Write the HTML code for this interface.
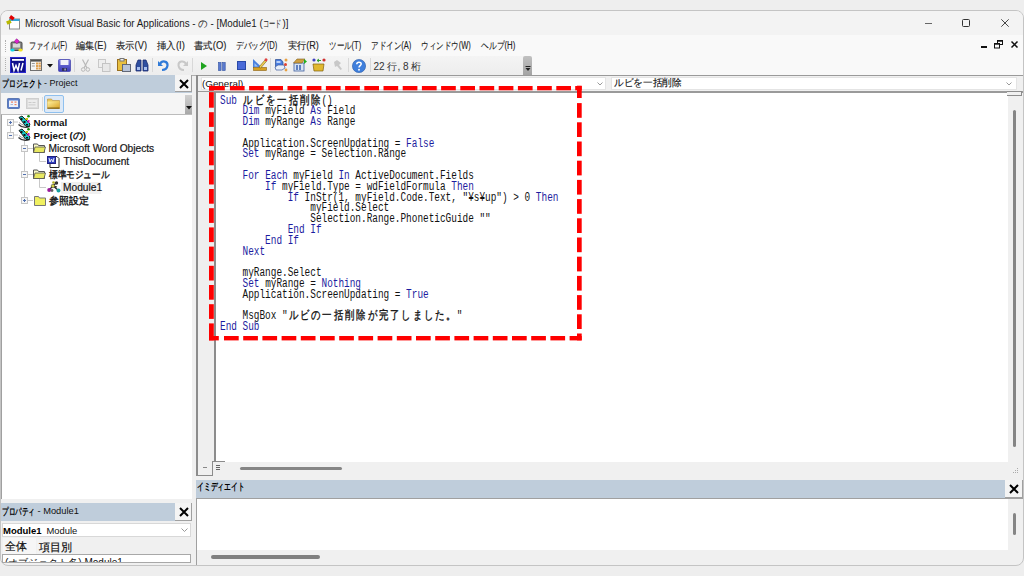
<!DOCTYPE html>
<html><head><meta charset="utf-8">
<style>
*{margin:0;padding:0;box-sizing:border-box}
html,body{width:1024px;height:576px;overflow:hidden;background:#eeeeee;font-family:"Liberation Sans",sans-serif;color:#000;position:relative}
.a{position:absolute}
.t{position:absolute;white-space:pre;line-height:1}
.hdr{position:absolute;background:#bfcddb}
.m{position:absolute;top:41px;transform-origin:0 0;-webkit-text-stroke:0.12px #222;font-size:10px;line-height:10px;white-space:pre;color:#222}
.tr{position:absolute;font-size:10.2px;line-height:10px;white-space:pre;color:#111;-webkit-text-stroke:0.2px #222}
.sep{position:absolute;top:58px;width:1px;height:14px;background:#d8d8d8}
.xb{position:absolute;background:#f4f4f4;border-right:1px solid #a0a0a0;border-bottom:1px solid #a0a0a0}
#code{position:absolute;left:220px;top:95.5px;font-family:"Liberation Mono",monospace;font-size:12px;line-height:10.8px;white-space:pre;transform:scaleX(0.7832);transform-origin:0 0;color:#111}
#code b{font-weight:normal;color:#1c1ca0}
#code i{font-style:normal;display:inline-block;width:14.4px;text-align:center;-webkit-text-stroke:0.35px #111}
svg{position:absolute;overflow:visible}
</style></head>
<body>
<!-- window frame -->
<div class="a" style="left:0;top:10px;width:1024px;height:556px;background:#f0f0f0;border:1px solid #c4c4c4;border-radius:8px"></div>
<!-- title bar -->
<div class="a" style="left:1px;top:11px;width:1022px;height:24px;background:#f3f3f3;border-radius:7px 7px 0 0"></div>
<svg style="left:6px;top:15px" width="15" height="15" viewBox="0 0 15 15">
  <rect x="3.5" y="4" width="10" height="10" fill="#fff" stroke="#8a8a8a" stroke-width="1"/>
  <rect x="3.5" y="4" width="10" height="2" fill="#33a8d8"/>
  <rect x="3.6" y="1" width="4.5" height="3.5" fill="#e00000" transform="rotate(35 5.8 2.8)"/>
  <rect x="0.6" y="5.5" width="4.5" height="3.5" fill="#b8b800" transform="rotate(-25 2.8 7.2)"/>
</svg>
<div class="t" style="left:24.5px;top:18.5px;font-size:10.3px;color:#1a1a1a;transform:scaleX(0.95);transform-origin:0 0">Microsoft Visual Basic for Applications - の - [Module1 (<span style="display:inline-block;width:21px;white-space:nowrap;vertical-align:top"><span style="display:inline-block;transform:scaleX(0.66);transform-origin:0 0">コード</span></span>)]</div>
<!-- window buttons -->
<div class="a" style="left:924.5px;top:22.5px;width:7.5px;height:1px;background:#666"></div>
<div class="a" style="left:962px;top:19px;width:8px;height:8px;border:1px solid #333;border-radius:1.5px"></div>
<svg style="left:1001px;top:19px" width="8" height="8"><path d="M0.3 0.3L7.7 7.7M7.7 0.3L0.3 7.7" stroke="#333" stroke-width="0.9"/></svg>

<!-- menu+toolbar area -->
<div class="a" style="left:1px;top:35px;width:1022px;height:40px;background:#f9f9f9"></div>
<div class="a" style="left:1px;top:75px;width:1022px;height:1px;background:#b0b0b0"></div>
<!-- menu grip -->
<div class="a" style="left:5px;top:40px;width:1px;height:12px;border-left:1px dotted #b0b0b0"></div>
<svg style="left:10px;top:39px" width="13" height="13" viewBox="0 0 13 13"><rect x="1" y="3" width="11" height="8.5" rx="1.2" fill="#8a8a8a" stroke="#3a3a3a" stroke-width="0.9"/><rect x="3" y="4.5" width="7" height="4" fill="#d8d8d8"/><rect x="5" y="0.5" width="3.6" height="3.6" fill="#e020d0" stroke="#802080" stroke-width="0.5" transform="rotate(40 6.8 2.3)"/><ellipse cx="2.5" cy="11" rx="2.2" ry="1.6" fill="#10d8e8"/><ellipse cx="10.5" cy="11" rx="2.2" ry="1.6" fill="#f0e020"/></svg>
<div class="m" style="left:28.5px;transform:scaleX(0.722)">ファイル(F)</div>
<div class="m" style="left:76px;transform:scaleX(0.915)">編集(E)</div>
<div class="m" style="left:116px;transform:scaleX(0.93)">表示(V)</div>
<div class="m" style="left:157px;transform:scaleX(0.947)">挿入(I)</div>
<div class="m" style="left:194px;transform:scaleX(0.94)">書式(O)</div>
<div class="m" style="left:236px;transform:scaleX(0.768)">デバッグ(D)</div>
<div class="m" style="left:288px;transform:scaleX(0.909)">実行(R)</div>
<div class="m" style="left:328.5px;transform:scaleX(0.753)">ツール(T)</div>
<div class="m" style="left:370.5px;transform:scaleX(0.757)">アドイン(A)</div>
<div class="m" style="left:421px;transform:scaleX(0.753)">ウィンドウ(W)</div>
<div class="m" style="left:480.5px;transform:scaleX(0.78)">ヘルプ(H)</div>
<!-- MDI buttons -->
<div class="a" style="left:981px;top:46px;width:5.5px;height:1.8px;background:#111"></div>
<svg style="left:994px;top:40px" width="10" height="9"><rect x="3.5" y="0.5" width="5" height="4" fill="none" stroke="#111"/><rect x="0.5" y="3.5" width="5" height="4.5" fill="#f9f9f9" stroke="#111"/><rect x="0.5" y="3.5" width="5" height="1.2" fill="#111"/><rect x="3.5" y="0.5" width="5" height="1.2" fill="#111"/></svg>
<svg style="left:1011px;top:40.5px" width="7" height="7"><path d="M0.5 0.5L6.5 6.5M6.5 0.5L0.5 6.5" stroke="#111" stroke-width="1.5"/></svg>

<!-- toolbar -->
<div class="a" style="left:1px;top:56px;width:523px;height:19px;background:linear-gradient(#f4f4f4,#ededed)"></div>
<div class="a" style="left:5px;top:58px;width:1px;height:13px;border-left:1px dotted #b0b0b0"></div>
<svg style="left:10px;top:57px" width="16" height="16" viewBox="0 0 16 16"><rect x="0.5" y="0.5" width="15" height="15" fill="#10108a" stroke="#2a2ad0"/><rect x="2" y="2" width="12" height="1.8" fill="#fff"/><path d="M2.5 6L4 13.5L6 8.5L8 13.5L9.5 6" fill="none" stroke="#fff" stroke-width="1.5"/><path d="M13 6L11 13.5" stroke="#fff" stroke-width="1.5"/></svg>
<svg style="left:29.5px;top:59px" width="12" height="12" viewBox="0 0 12 12"><rect x="0.5" y="0.5" width="11" height="11" fill="#f4f4f4" stroke="#707070"/><rect x="1" y="1" width="10" height="1.6" fill="#505050"/><g fill="#e0a050"><rect x="6" y="3.5" width="2.2" height="2"/><rect x="8.6" y="3.5" width="2.2" height="2"/><rect x="6" y="6" width="2.2" height="2"/><rect x="8.6" y="6" width="2.2" height="2"/><rect x="6" y="8.5" width="2.2" height="2"/><rect x="8.6" y="8.5" width="2.2" height="2"/></g><rect x="1.8" y="4" width="3" height="1" fill="#999"/><rect x="1.8" y="6.5" width="3" height="1" fill="#999"/></svg>
<svg style="left:47px;top:64px" width="6" height="4"><path d="M0 0H6L3 3.5Z" fill="#111"/></svg>
<svg style="left:58px;top:59px" width="13" height="13" viewBox="0 0 13 13"><defs><linearGradient id="sg" x1="0" y1="0" x2="0" y2="1"><stop offset="0" stop-color="#7a7ae0"/><stop offset="1" stop-color="#3a3ab8"/></linearGradient></defs><rect x="0.5" y="0.5" width="12" height="12" rx="1" fill="url(#sg)" stroke="#4a4ab0" stroke-width="0.8"/><rect x="2.5" y="1" width="8" height="5" fill="#f0f0fa"/><rect x="4" y="9" width="5" height="3" fill="#303060"/><rect x="6.5" y="9.5" width="1.2" height="2" fill="#c0c0e0"/></svg>
<div class="sep" style="left:74px"></div>
<svg style="left:81px;top:59px" width="9" height="13" viewBox="0 0 9 13"><path d="M1.5 0.5L6 9M7.5 0.5L3 9" stroke="#b8b8b8" stroke-width="1.2" fill="none"/><circle cx="2.2" cy="10.5" r="1.8" fill="none" stroke="#b8b8b8"/><circle cx="6.8" cy="10.5" r="1.8" fill="none" stroke="#b8b8b8"/></svg>
<svg style="left:98px;top:59px" width="13" height="13"><rect x="0.5" y="0.5" width="7" height="8" fill="#eee" stroke="#c8c8c8"/><rect x="4.5" y="4.5" width="7.5" height="8" fill="#e8e8e8" stroke="#c4c4c4"/></svg>
<svg style="left:117px;top:58px" width="14" height="14" viewBox="0 0 14 14"><rect x="0.5" y="1.5" width="9" height="11" fill="#e8c040" stroke="#9a7020"/><rect x="3" y="0.5" width="4" height="2.5" fill="#f0f0f0" stroke="#777"/><rect x="5.5" y="6.5" width="8" height="7" fill="#b8c4d8" stroke="#606878"/></svg>
<svg style="left:135px;top:59px" width="14" height="13" viewBox="0 0 14 13"><path d="M1 12V6L3 1H6V12Z M8 12V1H11L13 6V12Z" fill="#2f4fa0" stroke="#1c2c70" stroke-width="0.8"/><rect x="2" y="8" width="3" height="3" fill="#a8c0f0"/><rect x="9" y="8" width="3" height="3" fill="#a8c0f0"/></svg>
<div class="sep" style="left:152px"></div>
<svg style="left:158px;top:59px" width="11" height="12" viewBox="0 0 11 12"><path d="M2 5C4 1 10 2 9.5 6.5C9 10 6 11 4 11" fill="none" stroke="#2f7ad8" stroke-width="2.2"/><path d="M0 2V7H5Z" fill="#2f7ad8"/></svg>
<svg style="left:177px;top:59px" width="11" height="12" viewBox="0 0 11 12"><path d="M9 5C7 1 1 2 1.5 6.5C2 10 5 11 7 11" fill="none" stroke="#c8c8c8" stroke-width="2"/><path d="M11 2V7H6Z" fill="#c8c8c8"/></svg>
<div class="sep" style="left:192px"></div>
<svg style="left:201px;top:62px" width="6" height="8"><path d="M0 0L6 4L0 8Z" fill="#1ea31e"/></svg>
<svg style="left:218px;top:62px" width="8" height="9"><rect x="0.5" y="0.5" width="2.6" height="8" fill="#5a7ad0" stroke="#3050a0" stroke-width="0.6"/><rect x="4.6" y="0.5" width="2.6" height="8" fill="#5a7ad0" stroke="#3050a0" stroke-width="0.6"/></svg>
<svg style="left:237px;top:61px" width="9" height="9"><rect x="0.5" y="0.5" width="8" height="8" fill="#4a6ad8" stroke="#2a4aa8"/></svg>
<svg style="left:253px;top:58px" width="15" height="14" viewBox="0 0 15 14"><path d="M0 1L9 9.5H0Z" fill="#4a80e0"/><path d="M1.5 5L5 8.5H1.5Z" fill="#9ac0f0"/><rect x="0.5" y="9.5" width="13" height="3" fill="#d8a020" stroke="#8a6010" stroke-width="0.6"/><path d="M6 9L12 2L13.5 3.3L7.5 10.2Z" fill="#f0d050" stroke="#7a5a10" stroke-width="0.6"/><circle cx="13" cy="1.8" r="1.5" fill="#e04040"/></svg>
<div class="sep" style="left:270px"></div>
<svg style="left:275px;top:58px" width="14" height="14" viewBox="0 0 14 14"><path d="M0.5 1.5H6L8 4L8 9H0.5Z" fill="#4a7ee0" stroke="#2a4a90" stroke-width="0.7"/><rect x="1.5" y="3" width="4" height="2" fill="#b8d0f8"/><path d="M0 9L3 7H9L10 10L7 12H1Z" fill="#e8eef8" stroke="#3a5aa0" stroke-width="0.7"/><circle cx="10.5" cy="6.5" r="1.5" fill="#e04030"/><circle cx="11" cy="2" r="1.5" fill="#e8a040"/><circle cx="11" cy="12" r="1.4" fill="#e8a040"/></svg>
<svg style="left:293px;top:58px" width="14" height="14" viewBox="0 0 14 14"><rect x="1" y="5" width="10" height="8" fill="#d8e4f4" stroke="#4060a0" stroke-width="0.8"/><path d="M0.5 5L4 1H12L9 5Z" fill="#d0a040" stroke="#806020" stroke-width="0.6"/><path d="M11 1L14 3.5L11 6Z" fill="#20b020"/><rect x="3" y="7" width="2" height="5" fill="#6080c0"/><rect x="6" y="7" width="2" height="5" fill="#6080c0"/></svg>
<svg style="left:312px;top:58px" width="14" height="14" viewBox="0 0 14 14"><path d="M1 6H12L11 13H2Z" fill="#e0b830" stroke="#806010" stroke-width="0.7"/><circle cx="2" cy="2" r="1.6" fill="#4040c0"/><circle cx="12" cy="2" r="1.6" fill="#d03030"/><path d="M5 2.5H9M5 2.5L7 1M5 2.5L7 4" stroke="#30a030" stroke-width="1"/></svg>
<svg style="left:333px;top:59px" width="9" height="11" viewBox="0 0 9 11"><path d="M1 3L4 1L8 4L6 6L9 10L7.5 11L4 7L2 8Z" fill="#c8c8c8"/></svg>
<div class="sep" style="left:348px"></div>
<svg style="left:352px;top:59px" width="14" height="14" viewBox="0 0 14 14"><circle cx="7" cy="7" r="6.6" fill="#3f7fdc" stroke="#2a5aa8" stroke-width="0.6"/><path d="M4.8 5.2C4.8 2.5 9.2 2.5 9.2 5C9.2 6.6 7 6.8 7 8.6" fill="none" stroke="#fff" stroke-width="1.5"/><circle cx="7" cy="10.8" r="0.95" fill="#fff"/></svg>
<div class="sep" style="left:370px"></div>
<div class="t" style="left:373.5px;top:62px;font-size:10px;color:#333">22 行, 8 桁</div>
<div class="a" style="left:523px;top:56px;width:9px;height:19px;background:linear-gradient(#c0c0c0,#a4a4a4);border-radius:2px 2px 0 0"></div>
<svg style="left:525px;top:66px" width="6" height="6"><rect x="0.5" y="0" width="5" height="1" fill="#222"/><path d="M0.5 2H5.5L3 5Z" fill="#222"/></svg>

<!-- Project explorer -->
<div class="hdr" style="left:1px;top:75px;width:191px;height:18px"></div>
<div class="t" style="left:2px;top:78.5px;font-size:9.5px;color:#000;font-weight:bold;transform:scaleX(0.68);transform-origin:0 0">プロジェクト</div><div class="t" style="left:44px;top:78.5px;font-size:9px;color:#111">- Project</div>
<div class="xb" style="left:175px;top:75px;width:17px;height:17px"></div>
<svg style="left:179px;top:79px" width="10" height="10"><path d="M1 1L9 9M9 1L1 9" stroke="#000" stroke-width="2"/></svg>
<div class="a" style="left:1px;top:93px;width:191px;height:21px;background:#f5f5f5"></div>
<svg style="left:7px;top:98px" width="13" height="11" viewBox="0 0 13 11"><rect x="0.5" y="0.5" width="12" height="10" rx="0.8" fill="#5a7cc8" stroke="#4a68a8" stroke-width="0.8"/><rect x="2" y="2.5" width="9" height="6.5" fill="#eef2fa"/><rect x="4" y="3.5" width="2" height="1.2" fill="#f08060"/><rect x="7.5" y="3.5" width="2" height="1.2" fill="#f08060"/><rect x="7.5" y="6" width="2" height="1.2" fill="#f08060"/><rect x="3.5" y="6" width="2.5" height="1" fill="#a8b8d8"/></svg>
<svg style="left:26px;top:98px" width="13" height="11"><rect x="0.5" y="0.5" width="12" height="10" fill="#dcdcdc" stroke="#cfcfcf"/><rect x="2" y="2" width="9" height="7" fill="#ececec"/><rect x="2.5" y="4" width="3" height="0.8" fill="#c4c4c4"/><rect x="6.5" y="4" width="3" height="0.8" fill="#c4c4c4"/><rect x="2.5" y="6.5" width="7" height="0.8" fill="#c4c4c4"/></svg>
<div class="a" style="left:42px;top:97px;width:1px;height:14px;background:#dcdcdc"></div>
<div class="a" style="left:44px;top:94.5px;width:19.5px;height:18.5px;background:#dde9f6;border:1px solid #8fc0ee;border-radius:2px"></div>
<svg style="left:47px;top:98px" width="13" height="11" viewBox="0 0 13 11"><defs><linearGradient id="fg" x1="0" y1="0" x2="1" y2="1"><stop offset="0" stop-color="#fff0a0"/><stop offset="1" stop-color="#d8a020"/></linearGradient></defs><path d="M0.5 1H4.5L5.5 2.5H12.5V10.5H0.5Z" fill="#e8c860" stroke="#b89040" stroke-width="0.6"/><rect x="0.5" y="3.5" width="12" height="7" fill="url(#fg)"/><rect x="0.5" y="9.6" width="12" height="1" fill="#6a5010"/></svg>
<div class="a" style="left:185px;top:95px;width:7px;height:19px;background:linear-gradient(#d0d0d0,#a8a8a8)"></div>
<svg style="left:186px;top:106px" width="6" height="4"><path d="M0 0H6L3 3.5Z" fill="#111"/></svg>
<div class="a" style="left:1px;top:114px;width:191px;height:385px;background:#fff;border-top:1px solid #bcbcbc;border-left:1.5px solid #a0a0a0"></div>
<!-- tree lines -->
<svg style="left:0;top:0" width="200" height="220">
  <g stroke="#c8c8c8" stroke-width="1" fill="none">
    <path d="M10.5 125V132"/>
    <path d="M13 122H18M13 135H18"/>
    <path d="M24.5 138V145M24.5 151V171M24.5 177V197"/>
    <path d="M28 148.5H33M28 174.5H33M28 200.5H33"/>
    <path d="M39.5 152V161.5H46M39.5 178V187.5H46"/>
  </g>
  <g fill="#f6f6f6" stroke="#c4c4c4">
    <rect x="7.5" y="119.5" width="6" height="6"/>
    <rect x="7.5" y="132.5" width="6" height="6"/>
    <rect x="21.5" y="145.5" width="6" height="6"/>
    <rect x="21.5" y="171.5" width="6" height="6"/>
    <rect x="21.5" y="197.5" width="6" height="6"/>
  </g>
  <g stroke="#5070b0" stroke-width="1">
    <path d="M9 122.5H12M10.5 121V124"/>
    <path d="M9 135.5H12"/>
    <path d="M23 148.5H26"/>
    <path d="M23 174.5H26"/>
    <path d="M23 200.5H26M24.5 199V202"/>
  </g>
</svg>
<svg style="left:18px;top:115px" width="13" height="14" viewBox="0 0 13 14"><path d="M0.5 9.5Q5 14 12 11.5" fill="none" stroke="#333" stroke-width="1.3"/><path d="M1 7.5Q6 12 12 9.5" fill="none" stroke="#888" stroke-width="0.8"/><path d="M1 2.5L4 1L12 9L11 11.5L8 11.5Z" fill="#18c8c8" stroke="#111" stroke-width="0.9"/><rect x="2.5" y="3" width="2" height="2" fill="#111"/><rect x="5.5" y="6" width="2" height="2" fill="#111"/><rect x="8" y="9" width="2" height="1.5" fill="#111"/><circle cx="10.5" cy="1.3" r="1.3" fill="#108a10"/><rect x="7.5" y="3" width="2.5" height="2" fill="#c8c810"/><rect x="9.5" y="5" width="2" height="3" fill="#c020c0"/></svg>
<div class="tr" style="left:33.5px;top:117.5px;font-weight:bold;font-size:9.8px;-webkit-text-stroke:0">Normal</div>
<svg style="left:18px;top:128px" width="13" height="14" viewBox="0 0 13 14"><path d="M0.5 9.5Q5 14 12 11.5" fill="none" stroke="#333" stroke-width="1.3"/><path d="M1 7.5Q6 12 12 9.5" fill="none" stroke="#888" stroke-width="0.8"/><path d="M1 2.5L4 1L12 9L11 11.5L8 11.5Z" fill="#18c8c8" stroke="#111" stroke-width="0.9"/><rect x="2.5" y="3" width="2" height="2" fill="#111"/><rect x="5.5" y="6" width="2" height="2" fill="#111"/><rect x="8" y="9" width="2" height="1.5" fill="#111"/><circle cx="10.5" cy="1.3" r="1.3" fill="#108a10"/><rect x="7.5" y="3" width="2.5" height="2" fill="#c8c810"/><rect x="9.5" y="5" width="2" height="3" fill="#c020c0"/></svg>
<div class="tr" style="left:33.5px;top:130.5px;font-weight:bold;font-size:9.8px;-webkit-text-stroke:0">Project (の)</div>
<svg style="left:33px;top:143px" width="13" height="10" viewBox="0 0 13 10"><path d="M0.5 1H4.5L5.5 2.5H11.5V9.5H0.5Z" fill="#f8f8c8" stroke="#555"/><path d="M2 4H12.5L11 9.5H0.5Z" fill="#e8e860" stroke="#555" stroke-width="0.8"/></svg>
<div class="tr" style="left:48.5px;top:143.5px">Microsoft Word Objects</div>
<svg style="left:47px;top:155px" width="13" height="13" viewBox="0 0 13 13"><path d="M3 1.5H10L12 3.5V12.5H3Z" fill="#fff" stroke="#222"/><rect x="0.5" y="1.5" width="8" height="7" fill="#3040c0" stroke="#202080"/><path d="M2 3L3 7L4.5 4L6 7L7 3" fill="none" stroke="#fff" stroke-width="0.9"/></svg>
<div class="tr" style="left:63.5px;top:156.5px">ThisDocument</div>
<svg style="left:33px;top:169px" width="13" height="10" viewBox="0 0 13 10"><path d="M0.5 1H4.5L5.5 2.5H11.5V9.5H0.5Z" fill="#f8f8c8" stroke="#555"/><path d="M2 4H12.5L11 9.5H0.5Z" fill="#e8e860" stroke="#555" stroke-width="0.8"/></svg>
<div class="tr" style="left:48.5px;top:169.5px;transform:scaleX(0.86);transform-origin:0 0;-webkit-text-stroke:0.35px #111">標準モジュール</div>
<div class="a" style="left:61px;top:182px;width:40px;height:12px;background:#f0f0f0"></div>
<svg style="left:47px;top:181px" width="14" height="12" viewBox="0 0 14 12"><path d="M2 9L6 5L9 2M6 5L11 9M6 5L10 6" stroke="#222" stroke-width="1.2" fill="none"/><circle cx="2.2" cy="9" r="2" fill="#9a1a9a"/><circle cx="6" cy="5" r="1.8" fill="#d0d040" stroke="#333" stroke-width="0.5"/><circle cx="9.5" cy="2" r="1.7" fill="#333"/><circle cx="11.5" cy="9.5" r="2" fill="#18a0a0"/><circle cx="5" cy="9.5" r="1.4" fill="#606060"/><circle cx="6.5" cy="1.5" r="1.3" fill="#b0b020"/></svg>
<div class="tr" style="left:63px;top:183px">Module1</div>
<svg style="left:34px;top:195px" width="12" height="11" viewBox="0 0 12 11"><path d="M0.5 1.5H4.5L5.5 3H11.5V10.5H0.5Z" fill="#f0f060" stroke="#777"/></svg>
<div class="tr" style="left:48.5px;top:195.5px;-webkit-text-stroke:0.35px #111">参照設定</div>

<!-- Properties -->
<div class="hdr" style="left:1px;top:503px;width:191px;height:18px"></div>
<div class="t" style="left:2px;top:506.5px;font-size:9.5px;color:#000;font-weight:bold;transform:scaleX(0.66);transform-origin:0 0">プロパティ</div><div class="t" style="left:37.5px;top:506.5px;font-size:9.3px;color:#111">- Module1</div>
<div class="xb" style="left:175px;top:503px;width:17px;height:18px"></div>
<svg style="left:179px;top:507px" width="10" height="10"><path d="M1 1L9 9M9 1L1 9" stroke="#000" stroke-width="2"/></svg>
<div class="a" style="left:2px;top:523px;width:189px;height:14px;background:#fff;border:1px solid #d8d8d8"></div>
<div class="t" style="left:3px;top:526px;font-size:9.5px;color:#000;font-weight:bold">Module1</div><div class="t" style="left:46.5px;top:526px;font-size:9.4px;color:#111">Module</div>
<svg style="left:181px;top:528px" width="7" height="4"><path d="M0.5 0.5L3.5 3.5L6.5 0.5" fill="none" stroke="#999"/></svg>
<div class="a" style="left:3px;top:538px;width:33px;height:16px;background:#f6f6f6"></div><div class="a" style="left:37px;top:539px;width:35px;height:15px;background:#f3f3f3"></div>
<div class="t" style="left:5px;top:541px;font-size:10.5px;color:#111;-webkit-text-stroke:0.2px #111">全体</div>
<div class="t" style="left:39px;top:541.5px;font-size:10.5px;color:#111;-webkit-text-stroke:0.2px #111">項目別</div>
<div class="a" style="left:2px;top:554px;width:189px;height:9px;background:#fff;border:1px solid #a8a8a8;overflow:hidden"><div class="t" style="left:2px;top:2.5px;font-size:10px;color:#111">(オブジェクト名) Module1</div></div>

<!-- Code window -->
<div class="a" style="left:196px;top:75px;width:827px;height:401px;background:#f0f0f0"></div>
<div class="a" style="left:196px;top:75px;width:827px;height:1px;background:#9a9a9a"></div>
<div class="a" style="left:196px;top:75px;width:2px;height:401px;background:#8c8c8c"></div>
<div class="a" style="left:201px;top:77px;width:405px;height:13px;background:#fff;border:1px solid #e4e4e4"></div>
<div class="t" style="left:202px;top:78.5px;font-size:9.8px;color:#111">(General)</div>
<svg style="left:597px;top:82px" width="6" height="4"><path d="M0.5 0.5L3 3L5.5 0.5" fill="none" stroke="#999"/></svg>
<div class="a" style="left:611px;top:77px;width:406px;height:13px;background:#fff;border:1px solid #e4e4e4"></div>
<div class="t" style="left:614px;top:78px;font-size:10px;color:#111;-webkit-text-stroke:0.15px #111;transform:scaleX(0.965);transform-origin:0 0">ルビを一括削除</div>
<svg style="left:1006px;top:82px" width="6" height="4"><path d="M0.5 0.5L3 3L5.5 0.5" fill="none" stroke="#999"/></svg>
<div class="a" style="left:198px;top:91px;width:825px;height:1.5px;background:#9a9a9a"></div>
<div class="a" style="left:198px;top:92px;width:16px;height:369px;background:#efefef"></div>
<div class="a" style="left:214px;top:92px;width:1.5px;height:370px;background:#8c8c8c"></div>
<div class="a" style="left:215.5px;top:92.5px;width:792.5px;height:369px;background:#fff"></div>
<div class="a" style="left:1007px;top:91px;width:15px;height:5px;border:1.5px solid #8c8c8c;border-left:none;background:#f0f0f0"></div>
<div class="a" style="left:1013px;top:110px;width:3px;height:337px;background:#858585;border-radius:2px"></div>
<div class="a" style="left:240px;top:467px;width:102px;height:3px;background:#858585;border-radius:2px"></div>
<!-- bottom-left view buttons -->
<div class="a" style="left:196px;top:474.5px;width:17px;height:1.5px;background:#8c8c8c"></div>
<div class="a" style="left:211.5px;top:461px;width:1.5px;height:15px;background:#8c8c8c"></div>
<div class="a" style="left:212px;top:461px;width:13px;height:1.2px;background:#8c8c8c"></div>
<div class="a" style="left:202.5px;top:466.5px;width:4px;height:1.5px;background:#888"></div>
<div class="a" style="left:216px;top:465px;width:4px;height:5px;border-top:1px solid #666;border-bottom:1px solid #666"></div>
<div class="a" style="left:216px;top:467px;width:4px;height:1px;background:#666"></div>
<svg style="left:1012px;top:468px" width="7" height="7"><g fill="#aaa"><rect x="5" y="0" width="1" height="1"/><rect x="3" y="2" width="1" height="1"/><rect x="5" y="2" width="1" height="1"/><rect x="1" y="4" width="1" height="1"/><rect x="3" y="4" width="1" height="1"/><rect x="5" y="4" width="1" height="1"/></g></svg>

<!-- Immediate -->
<div class="hdr" style="left:196px;top:480px;width:827px;height:18px"></div>
<div class="t" style="left:196.5px;top:482px;font-size:9.5px;color:#000;font-weight:bold;transform:scaleX(0.68);transform-origin:0 0">イミディエイト</div>
<div class="xb" style="left:1005px;top:480px;width:18px;height:18px"></div>
<svg style="left:1009px;top:484px" width="10" height="10"><path d="M1 1L9 9M9 1L1 9" stroke="#000" stroke-width="2"/></svg>
<div class="a" style="left:196px;top:498px;width:827px;height:1px;background:#a0a0a0"></div>
<div class="a" style="left:196px;top:499px;width:1px;height:66px;background:#a0a0a0"></div>
<div class="a" style="left:197px;top:499px;width:811px;height:51px;background:#fff"></div>
<div class="a" style="left:1013px;top:513px;width:3px;height:22px;background:#858585;border-radius:2px"></div>
<div class="a" style="left:211px;top:555px;width:109px;height:3.5px;background:#808080;border-radius:2px"></div>

<div id="code"><b>Sub</b> <i>ル</i><i>ビ</i><i>を</i><i>一</i><i>括</i><i>削</i><i>除</i>()
    <b>Dim</b> myField <b>As</b> Field
    <b>Dim</b> myRange <b>As</b> Range

    Application.ScreenUpdating = <b>False</b>
    <b>Set</b> myRange = Selection.Range

    <b>For Each</b> myField <b>In</b> ActiveDocument.Fields
        <b>If</b> myField.Type = wdFieldFormula <b>Then</b>
            <b>If</b> InStr(1, myField.Code.Text, "¥s¥up") &gt; 0 <b>Then</b>
                myField.Select
                Selection.Range.PhoneticGuide ""
            <b>End If</b>
        <b>End If</b>
    <b>Next</b>

    myRange.Select
    <b>Set</b> myRange = <b>Nothing</b>
    Application.ScreenUpdating = <b>True</b>

    MsgBox "<i>ル</i><i>ビ</i><i>の</i><i>一</i><i>括</i><i>削</i><i>除</i><i>が</i><i>完</i><i>了</i><i>し</i><i>ま</i><i>し</i><i>た</i><i>。</i>"
<b>End Sub</b></div>

<!-- red dashed highlight -->
<svg style="left:0;top:0" width="1024" height="576"><g fill="#ff0000"><rect x="209.0" y="86" width="15.8" height="4.3"/><rect x="229.9" y="86" width="14.7" height="4.3"/><rect x="249.1" y="86" width="14.7" height="4.3"/><rect x="268.3" y="86" width="14.7" height="4.3"/><rect x="287.5" y="86" width="14.7" height="4.3"/><rect x="306.7" y="86" width="14.7" height="4.3"/><rect x="325.9" y="86" width="14.7" height="4.3"/><rect x="345.1" y="86" width="14.7" height="4.3"/><rect x="364.3" y="86" width="14.7" height="4.3"/><rect x="383.5" y="86" width="14.7" height="4.3"/><rect x="402.7" y="86" width="14.7" height="4.3"/><rect x="421.9" y="86" width="14.7" height="4.3"/><rect x="441.1" y="86" width="14.7" height="4.3"/><rect x="460.3" y="86" width="14.7" height="4.3"/><rect x="479.5" y="86" width="14.7" height="4.3"/><rect x="498.7" y="86" width="14.7" height="4.3"/><rect x="517.9" y="86" width="14.7" height="4.3"/><rect x="537.1" y="86" width="14.7" height="4.3"/><rect x="556.3" y="86" width="14.7" height="4.3"/><rect x="575.2" y="86" width="6.5" height="4.3"/><rect x="577" y="85.7" width="4.7" height="12.3"/><rect x="577" y="103.1" width="4.7" height="14.7"/><rect x="577" y="122.3" width="4.7" height="14.7"/><rect x="577" y="141.5" width="4.7" height="14.7"/><rect x="577" y="160.7" width="4.7" height="14.7"/><rect x="577" y="179.9" width="4.7" height="14.7"/><rect x="577" y="199.1" width="4.7" height="14.7"/><rect x="577" y="218.3" width="4.7" height="14.7"/><rect x="577" y="237.5" width="4.7" height="14.7"/><rect x="577" y="256.7" width="4.7" height="14.7"/><rect x="577" y="275.9" width="4.7" height="14.7"/><rect x="577" y="295.1" width="4.7" height="14.7"/><rect x="577" y="314.3" width="4.7" height="14.7"/><rect x="577" y="333.5" width="4.7" height="6.9"/><rect x="209.0" y="336" width="9.8" height="4.4"/><rect x="224.0" y="336" width="14.7" height="4.4"/><rect x="243.2" y="336" width="14.7" height="4.4"/><rect x="262.4" y="336" width="14.7" height="4.4"/><rect x="281.6" y="336" width="14.7" height="4.4"/><rect x="300.8" y="336" width="14.7" height="4.4"/><rect x="320.0" y="336" width="14.7" height="4.4"/><rect x="339.2" y="336" width="14.7" height="4.4"/><rect x="358.4" y="336" width="14.7" height="4.4"/><rect x="377.6" y="336" width="14.7" height="4.4"/><rect x="396.8" y="336" width="14.7" height="4.4"/><rect x="416.0" y="336" width="14.7" height="4.4"/><rect x="435.2" y="336" width="14.7" height="4.4"/><rect x="454.4" y="336" width="14.7" height="4.4"/><rect x="473.6" y="336" width="14.7" height="4.4"/><rect x="492.8" y="336" width="14.7" height="4.4"/><rect x="512.0" y="336" width="14.7" height="4.4"/><rect x="531.2" y="336" width="14.7" height="4.4"/><rect x="550.4" y="336" width="14.7" height="4.4"/><rect x="569.6" y="336" width="12.1" height="4.4"/><rect x="209" y="85.7" width="4.8" height="22.0"/><rect x="209" y="112.2" width="4.8" height="14.7"/><rect x="209" y="131.4" width="4.8" height="14.7"/><rect x="209" y="150.6" width="4.8" height="14.7"/><rect x="209" y="169.8" width="4.8" height="14.7"/><rect x="209" y="189.0" width="4.8" height="14.7"/><rect x="209" y="208.2" width="4.8" height="14.7"/><rect x="209" y="227.4" width="4.8" height="14.7"/><rect x="209" y="246.6" width="4.8" height="14.7"/><rect x="209" y="265.8" width="4.8" height="14.7"/><rect x="209" y="285.0" width="4.8" height="14.7"/><rect x="209" y="304.2" width="4.8" height="14.7"/><rect x="209" y="323.4" width="4.8" height="17.0"/></g><rect x="209" y="90.6" width="5" height="1.6" fill="#a8a8a8"/></svg>
</body></html>
